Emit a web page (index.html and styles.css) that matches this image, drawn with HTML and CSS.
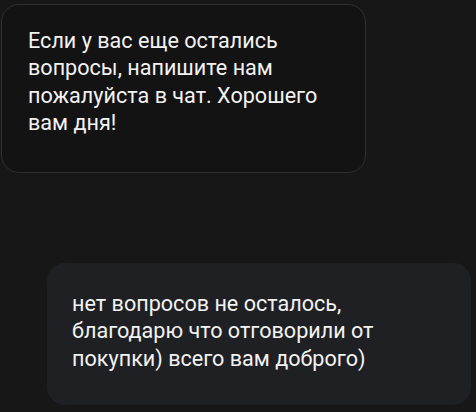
FILE: index.html
```html
<!DOCTYPE html>
<html lang="ru">
<head>
<meta charset="utf-8">
<link rel="stylesheet" href="styles.css">
</head>
<body>
<div class="chat">
  <div class="msg msg-in">
    <p class="text">Если у вас еще остались<br>вопросы, напишите нам<br>пожалуйста в чат. Хорошего<br>вам дня!</p>
  </div>
  <div class="msg msg-out">
    <p class="text">нет вопросов не осталось,<br>благодарю что отговорили от<br>покупки) всего вам доброго)</p>
  </div>
</div>
</body>
</html>
```
FILE: styles.css
```css
html, body {
  margin: 0;
  padding: 0;
  background: #171718;
  width: 476px;
  height: 412px;
  overflow: hidden;
}
.chat {
  display: flex;
  flex-direction: column;
  padding: 4px 5px 0 1px;
  font-family: Roboto, "Noto Sans", sans-serif;
  color: #f2f2f2;
}
.msg {
  box-sizing: border-box;
  border-radius: 18px;
}
.msg-in {
  width: 365px;
  height: 169px;
  background: #131313;
  border: 1px solid #303030;
  padding: 22px 10px 0 26px;
}
.msg-out {
  align-self: flex-end;
  margin-top: 90px;
  width: 424px;
  height: 142px;
  background: #1f2023;
  padding: 27px 10px 0 25px;
}
.text {
  margin: 0;
  font-size: 21.6px;
  line-height: 27.3px;
  white-space: nowrap;
}
```
